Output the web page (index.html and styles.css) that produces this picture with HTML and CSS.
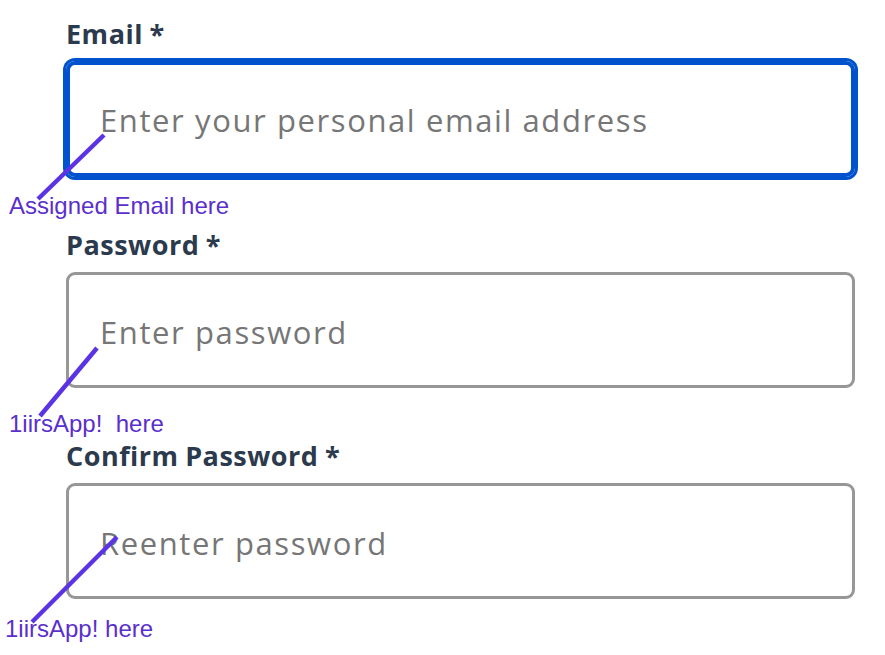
FILE: index.html
```html
<!DOCTYPE html>
<html lang="en">
<head>
<meta charset="utf-8">
<title>Sign up</title>
<link rel="stylesheet" href="styles.css">
</head>
<body>
<main class="form">
  <div class="field">
    <label class="label">Email <span class="req">*</span></label>
    <div class="input is-focused"><span class="placeholder">Enter your personal email address</span></div>
  </div>
  <div class="field">
    <label class="label">Password <span class="req">*</span></label>
    <div class="input"><span class="placeholder">Enter password</span></div>
  </div>
  <div class="field">
    <label class="label">Confirm Password <span class="req">*</span></label>
    <div class="input"><span class="placeholder">Reenter password</span></div>
  </div>

  <div class="notes" aria-hidden="true">
    <svg class="note-lines" width="885" height="655" viewBox="0 0 885 655">
      <line x1="104" y1="135" x2="38" y2="199"></line>
      <line x1="97" y1="348" x2="40" y2="416"></line>
      <line x1="117" y1="537" x2="32" y2="622"></line>
    </svg>
    <span class="note note-1">Assigned Email here</span>
    <span class="note note-2">1iirsApp!&nbsp; here</span>
    <span class="note note-3">1iirsApp! here</span>
  </div>
</main>
</body>
</html>
```
FILE: styles.css
```css
* { box-sizing: border-box; }
html, body { margin: 0; padding: 0; background: #fff; }
body { width: 885px; height: 655px; overflow: hidden; }

.form {
  position: relative;
  height: 655px;
  padding: 20px 30px 0 66px;
  display: flex;
  flex-direction: column;
  gap: 54px;
  font-family: "Open Sans", "DejaVu Sans", sans-serif;
}

.field {
  display: flex;
  flex-direction: column;
  gap: 14px;
}

.label {
  font-size: 27px;
  line-height: 27px;
  font-weight: 700;
  color: #2b3a4c;
  letter-spacing: 0.5px;
  word-spacing: -1px;
}

.input {
  height: 116px;
  border: 3px solid #979797;
  border-radius: 9px;
  display: flex;
  align-items: center;
  padding: 0 0 0 31px;
}
.input.is-focused {
  border: 4px solid #0053cc;
  box-shadow: 0 0 0 3px #0053cc;
}
.input.is-focused .placeholder { margin-left: -1px; padding-top: 2px; }

.placeholder {
  font-size: 31px;
  color: #767676;
  line-height: 1;
  padding-top: 4px;
  letter-spacing: 1.6px;
}

.notes {
  position: absolute;
  inset: 0;
  pointer-events: none;
}
.note-lines {
  position: absolute;
  left: 0; top: 0;
}
.note-lines line {
  stroke: #5a33e4;
  stroke-width: 4.5;
}
.note {
  position: absolute;
  font-family: "Liberation Sans", Arial, sans-serif;
  font-size: 24px;
  line-height: 24px;
  color: #5a2fcb;
  white-space: nowrap;
}
.note-1 { left: 9px; top: 194px; }
.note-2 { left: 9px; top: 412px; }
.note-3 { left: 5px; top: 617px; }
```
